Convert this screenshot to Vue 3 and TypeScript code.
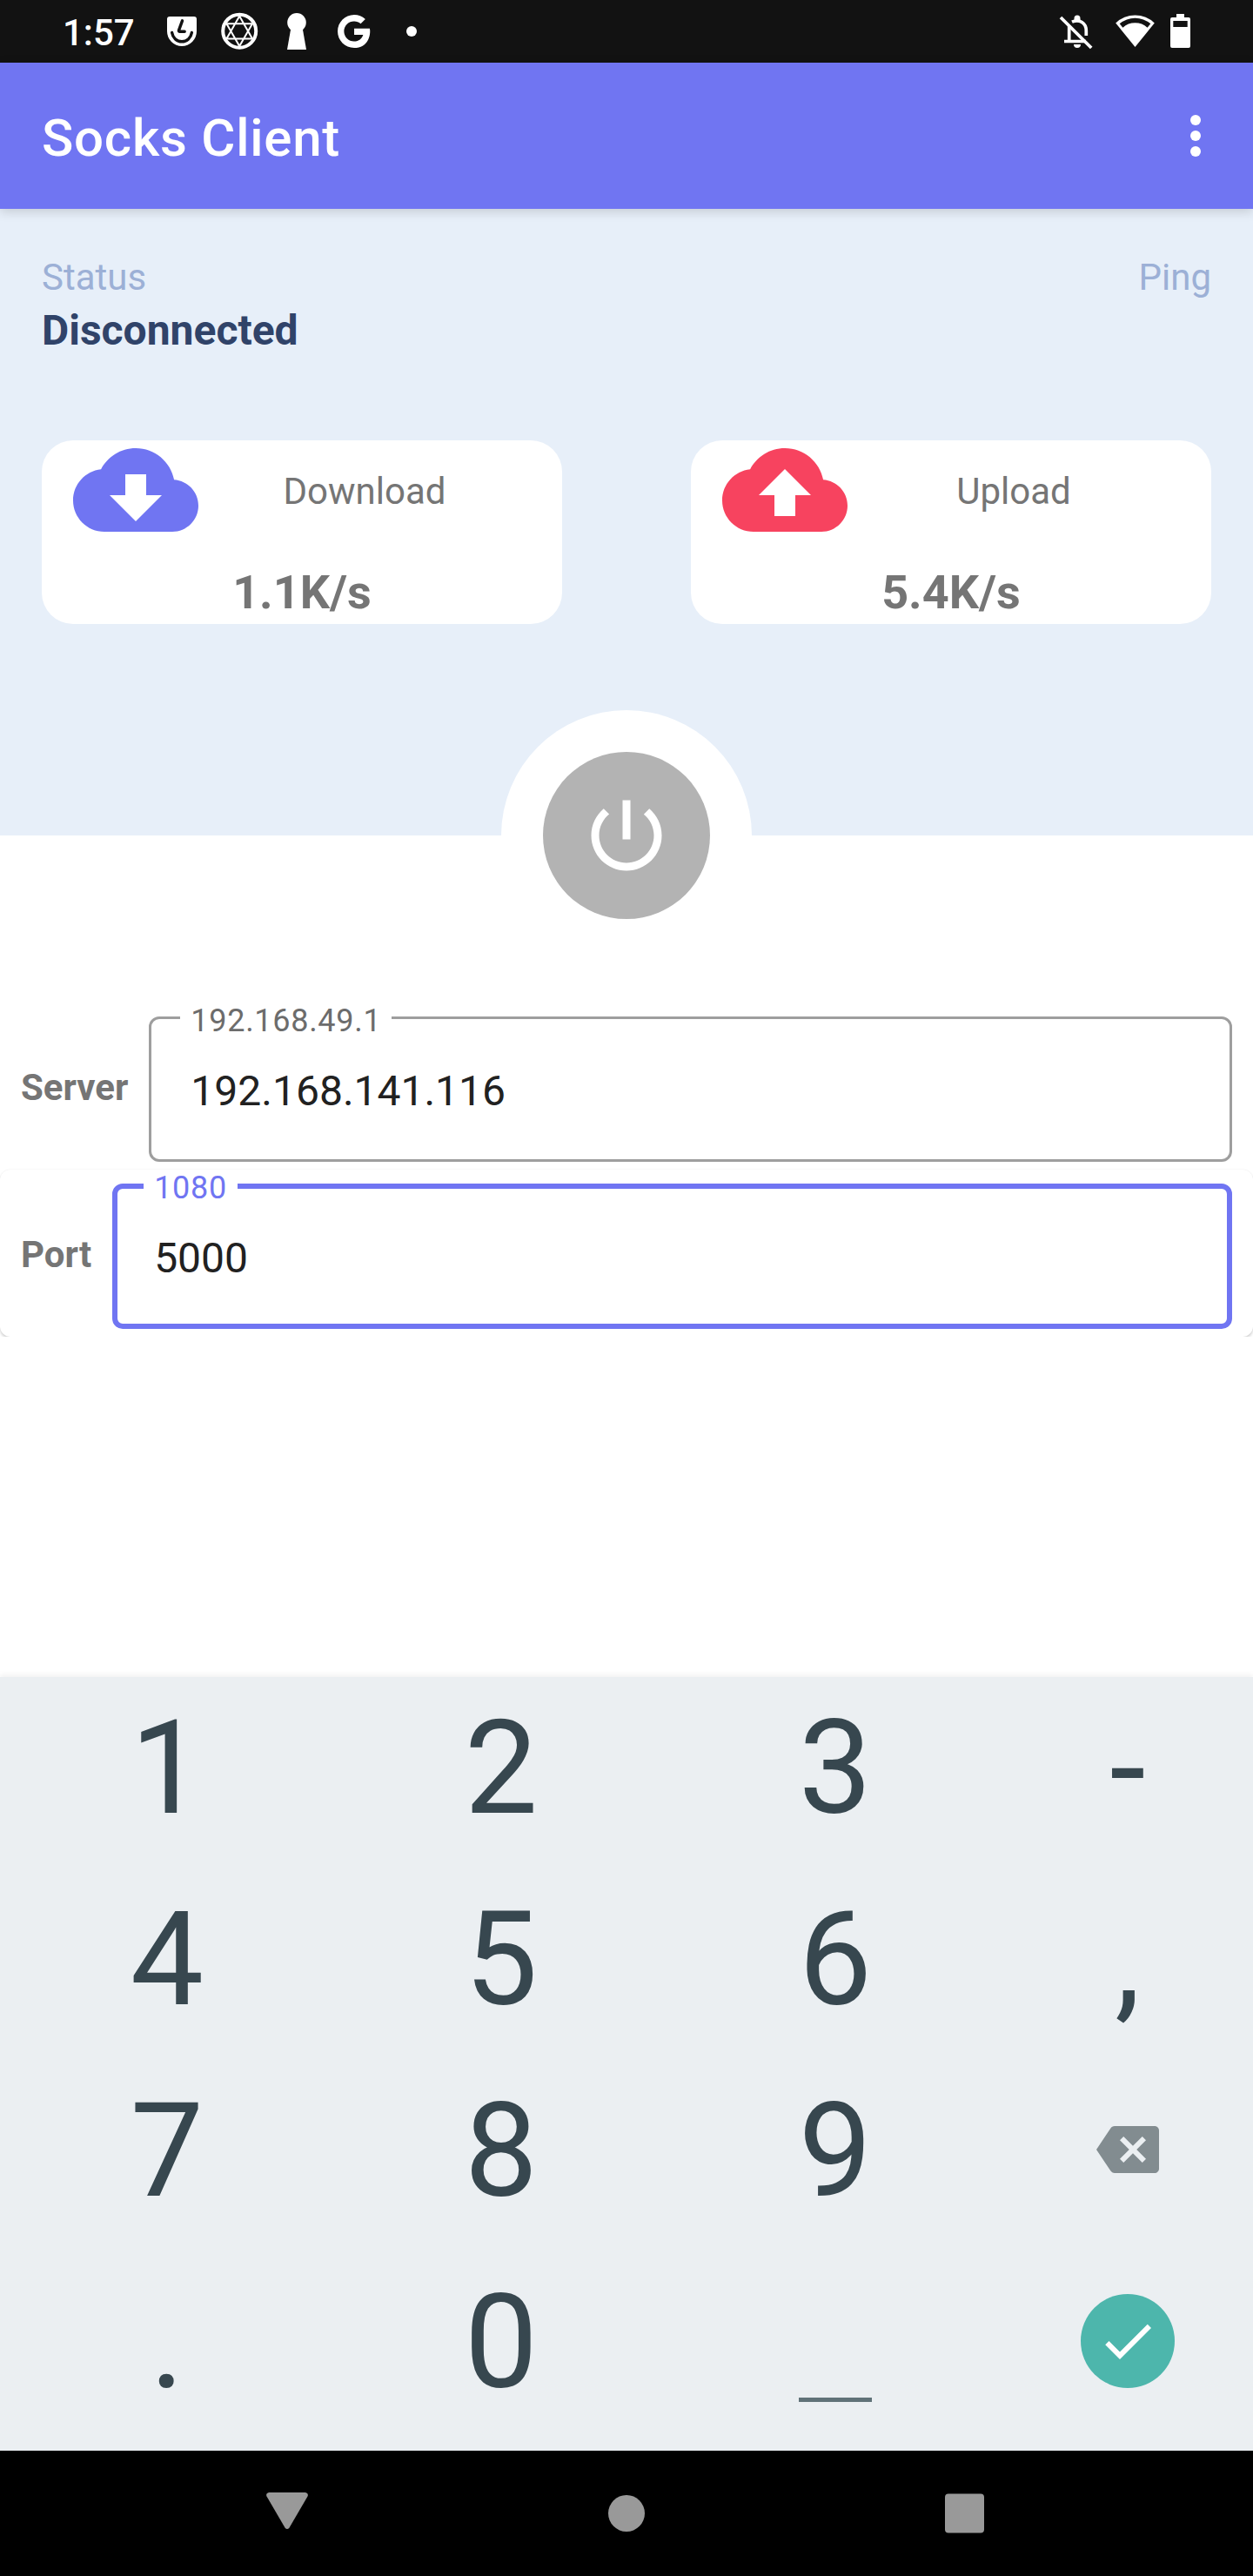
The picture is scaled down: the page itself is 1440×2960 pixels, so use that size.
<script setup lang="ts">
import { ref } from 'vue'

interface Transfer {
  id: string
  name: string
  rate: string
  color: string
  arrow: string
}

interface Field {
  id: string
  name: string
  hint: string
  value: string
  focused: boolean
}

const status = ref('Disconnected')

const transfers: Transfer[] = [
  { id: 'down', name: 'Download', rate: '1.1K/s', color: '#7075f2', arrow: 'M17 13l-5 5-5-5h3V9h4v4z' },
  { id: 'up', name: 'Upload', rate: '5.4K/s', color: '#f7435f', arrow: 'M14 13v4h-4v-4H7l5-5 5 5z' },
]

const fields = ref<Field[]>([
  { id: 'server', name: 'Server', hint: '192.168.49.1', value: '192.168.141.116', focused: false },
  { id: 'port', name: 'Port', hint: '1080', value: '5000', focused: true },
])

const keys: string[] = ['1', '2', '3', '-', '4', '5', '6', ',', '7', '8', '9', 'back', '.', '0', 'space', 'done']
</script>

<template>
  <div class="screen">
    <header class="status-bar">
      <span class="clock">1:57</span>
      <div class="notifications">
        <svg viewBox="0 0 48 48">
          <path fill="#fff" d="M10 7h28q3 0 3 3v14a17 17 0 0 1-34 0V10q0-3 3-3z" />
          <path class="cut" d="M12.6 25.5c1 6 5.6 10.3 11.4 10.3s10.400-4.300 11.400-10.300" />
          <path class="cut" d="M24.500 11.800l-4 11q-.4 1.500 1.200 1.500h5.500" />
        </svg>
        <svg viewBox="0 0 48 48" fill="none" stroke="#fff">
          <circle cx="24.200" cy="23.700" r="19" stroke-width="4" />
          <path stroke-width="2" d="M24.200 6.500L39 32.500H9.400zM24.200 41L9.400 15.200H39z" />
        </svg>
        <svg viewBox="0 0 48 48" fill="#fff">
          <circle cx="24" cy="13.800" r="10.800" />
          <path d="M17.300 20.500h13.400L35 45H13z" />
        </svg>
        <svg viewBox="0 0 48 48" fill="#fff">
          <path
            transform="translate(.2 1.200) scale(1.9)"
            d="M12.545 10.239v3.821h5.445c-.712 2.315-2.647 3.972-5.445 3.972a6.033 6.033 0 1 1 0-12.064c1.498 0 2.866.549 3.921 1.453l2.814-2.814A9.969 9.969 0 0 0 12.545 2C7.021 2 2.543 6.477 2.543 12s4.478 10 10.002 10c8.396 0 10.249-7.850 9.426-11.748z"
          />
        </svg>
        <svg viewBox="0 0 48 48" fill="#fff"><circle cx="24" cy="24" r="6" /></svg>
      </div>
      <div class="system">
        <svg viewBox="0 0 48 48" fill="none" stroke="#fff" stroke-width="3.700">
          <path d="M6 8l35.200 35" />
          <path d="M19 13.200c8.500-4 16.300 1.500 16.300 10V29M15.700 18v17M10 35.500h25" />
          <path fill="#fff" stroke="none" d="M21.500 12V9a3.500 3.500 0 0 1 7 0v3zM21 39h8a4 4 0 0 1-8 0z" />
        </svg>
        <svg class="wifi" viewBox="0 0 48 48">
          <path fill="#fff" d="M24.500 42L2.200 14.500A32 32 0 0 1 46.800 14.500z" />
          <path fill="#121212" d="M6.700 15.300A27.500 27.500 0 0 1 42.300 15.300L38.600 19.700A20.900 20.900 0 0 0 10.400 19.700z" />
        </svg>
        <svg class="battery" viewBox="0 0 24 48">
          <path fill="#fff" fill-rule="evenodd" d="M8 4h9v4h5q2 0 2 2v31q0 2-2 2H3q-2 0-2-2V10q0-2 2-2h5zM4.300 12v7h16.400v-7z" />
        </svg>
      </div>
    </header>

    <div class="app-bar">
      <h1>Socks Client</h1>
      <svg class="menu" viewBox="0 0 12 48" fill="#fff">
        <circle cx="6" cy="6" r="6" />
        <circle cx="6" cy="24" r="6" />
        <circle cx="6" cy="42" r="6" />
      </svg>
    </div>

    <section class="hero">
      <div class="captions"><span>Status</span><span>Ping</span></div>
      <div class="state">{{ status }}</div>
      <div class="cards">
        <article v-for="t in transfers" :key="t.id" class="card">
          <div class="card-head">
            <svg viewBox="0 4 24 16">
              <path
                :fill="t.color"
                d="M19.350 10.040C18.670 6.590 15.640 4 12 4 9.110 4 6.600 5.640 5.350 8.040 2.340 8.360 0 10.910 0 14c0 3.310 2.690 6 6 6h13c2.760 0 5-2.240 5-5 0-2.640-2.050-4.780-4.650-4.960z"
              />
              <path fill="#fff" :d="t.arrow" />
            </svg>
            <span>{{ t.name }}</span>
          </div>
          <div class="rate">{{ t.rate }}</div>
        </article>
      </div>
      <div class="power">
        <button aria-label="Connect">
          <svg viewBox="0 0 24 24" fill="#fff">
            <path
              d="M13 3h-2v10h2V3zm4.830 2.170l-1.420 1.420C17.990 7.860 19 9.810 19 12c0 3.870-3.130 7-7 7s-7-3.130-7-7c0-2.190 1.010-4.140 2.580-5.420L6.170 5.170C4.230 6.820 3 9.260 3 12c0 4.970 4.030 9 9 9s9-4.030 9-9c0-2.740-1.230-5.180-3.170-6.830z"
            />
          </svg>
        </button>
      </div>
    </section>

    <main class="form">
      <div v-for="f in fields" :key="f.id" class="row">
        <span class="name">{{ f.name }}</span>
        <div class="field" :class="{ focused: f.focused }">
          <span class="hint">{{ f.hint }}</span>
          <span class="value">{{ f.value }}</span>
        </div>
      </div>
    </main>

    <section class="keyboard">
      <div v-for="k in keys" :key="k" class="key">
        <svg v-if="k === 'back'" class="back" viewBox="0 3 24 18" fill="#828c90">
          <path
            fill-rule="evenodd"
            d="M22.300 3H7c-.69 0-1.230.350-1.590.880L0 12l5.410 8.110c.36.530.9.890 1.590.890h15.300c.95 0 1.700-.75 1.700-1.700V4.700c0-.95-.75-1.700-1.700-1.700zM19 15.590L17.590 17 14 13.410 10.410 17 9 15.590 12.590 12 9 8.410 10.410 7 14 10.590 17.590 7 19 8.410 15.410 12z"
          />
        </svg>
        <div v-else-if="k === 'space'" class="space"></div>
        <div v-else-if="k === 'done'" class="done">
          <svg viewBox="0 0 24 24" fill="#fff"><path d="M9 16.170L4.830 12l-1.420 1.410L9 19 21 7l-1.410-1.410z" /></svg>
        </div>
        <template v-else>{{ k }}</template>
      </div>
    </section>

    <nav class="nav-bar">
      <svg viewBox="0 0 48 48"><path d="M3 0h42q4 1 2.500 4.500L26.500 40.500q-2.500 3-5 0L.5 4.500Q-1 1 3 0z" /></svg>
      <svg viewBox="0 0 48 48"><circle cx="24" cy="24" r="21" /></svg>
      <svg viewBox="0 0 48 48"><rect x="0" y="1.500" width="45" height="45" rx="4" /></svg>
    </nav>
  </div>
</template>

<style>
body {
  margin: 0;
  background: #fff;
}
</style>

<style scoped>
.screen {
  display: flex;
  flex-direction: column;
  width: 1440px;
  height: 2960px;
  overflow: hidden;
  background: #fff;
  font-family: Roboto, sans-serif;
}

svg {
  display: block;
  flex: none;
}

.status-bar {
  display: flex;
  flex: none;
  align-items: center;
  height: 72px;
  padding-left: 72px;
  background: #121212;
  color: #fff;
}

.clock {
  width: 113px;
  padding-top: 3px;
  font-size: 42px;
  font-weight: 500;
}

.notifications {
  display: flex;
  gap: 18px;
}

.notifications svg,
.system svg {
  width: 48px;
  height: 48px;
}

.cut {
  fill: none;
  stroke: #121212;
  stroke-width: 3.400;
  stroke-linecap: round;
}

.system {
  display: flex;
  margin-left: auto;
  padding-right: 72px;
}

.system .wifi {
  margin-left: 19px;
}

.system .battery {
  width: 24px;
  margin-left: 16px;
}

.app-bar {
  position: relative;
  z-index: 1;
  display: flex;
  flex: none;
  align-items: center;
  justify-content: space-between;
  height: 168px;
  padding: 0 60px 0 48px;
  box-sizing: border-box;
  background: #7075f2;
  box-shadow: 0 3px 12px rgba(0, 0, 0, 0.160);
}

h1 {
  margin: 0;
  padding-top: 5px;
  color: #fff;
  font-size: 60px;
  font-weight: 500;
  letter-spacing: 0.750px;
}

.menu {
  width: 12px;
  height: 48px;
}

.hero {
  position: relative;
  flex: none;
  height: 720px;
  padding: 54px 48px 0;
  box-sizing: border-box;
  background: #e7eff9;
}

.captions {
  display: flex;
  justify-content: space-between;
  color: #9cb0d6;
  font-size: 42px;
  line-height: 50px;
}

.state {
  margin-top: 6px;
  color: #304369;
  font-size: 48px;
  font-weight: 700;
  line-height: 60px;
}

.cards {
  display: flex;
  justify-content: space-between;
  margin-top: 96px;
}

.card {
  width: 598px;
  height: 211px;
  border-radius: 36px;
  background: #fff;
  color: #757575;
}

.card-head {
  display: flex;
  align-items: center;
  padding: 9px 36px 0 36px;
}

.card-head svg {
  width: 144px;
  height: 96px;
}

.card-head span {
  flex: 1;
  padding-top: 4px;
  font-size: 42px;
  line-height: 50px;
  text-align: center;
}

.rate {
  margin-top: 37px;
  font-size: 54px;
  font-weight: 700;
  line-height: 65px;
  text-align: center;
}

.power {
  position: absolute;
  bottom: -144px;
  left: 576px;
  display: flex;
  align-items: center;
  justify-content: center;
  width: 288px;
  height: 288px;
  border-radius: 50%;
  background: #fff;
}

.power button {
  display: flex;
  align-items: center;
  justify-content: center;
  width: 192px;
  height: 192px;
  padding: 0;
  border: 0;
  border-radius: 50%;
  background: #b3b3b3;
}

.power svg {
  width: 108px;
  height: 108px;
}

.form {
  flex: 1;
  padding-top: 192px;
}

.row {
  display: flex;
  height: 192px;
  padding: 16px 24px 9px;
  box-sizing: border-box;
  border-radius: 12px;
}

.row + .row {
  box-shadow: 0 0 2px rgba(0, 0, 0, 0.100), 0 3px 3px rgba(0, 0, 0, 0.140);
  clip-path: inset(-3px 0 0 0);
}

.name {
  margin-right: 24px;
  color: #757575;
  font-size: 42px;
  font-weight: 700;
  line-height: 164px;
}

.field {
  position: relative;
  flex: 1;
  height: 167px;
  padding-left: 45px;
  box-sizing: border-box;
  border: 3px solid #9e9e9e;
  border-radius: 12px;
}

.value {
  color: #212121;
  font-size: 48px;
  line-height: 165px;
}

.hint {
  position: absolute;
  top: -19px;
  left: 33px;
  padding: 0 12px;
  background: #fff;
  color: #6c6c6c;
  font-size: 36px;
  letter-spacing: 0.700px;
  line-height: 42px;
}

.focused {
  padding-left: 42px;
  border: 6px solid #7075f2;
}

.focused .value {
  line-height: 159px;
}

.focused .hint {
  top: -22px;
  left: 30px;
  color: #7075f2;
}

.keyboard {
  display: grid;
  flex: none;
  grid-template-columns: 384px 384px 384px 288px;
  grid-auto-rows: 220px;
  height: 889px;
  background: #ebeff2;
  box-shadow: 0 -3px 6px rgba(0, 0, 0, 0.050);
  color: #37474f;
  font-size: 150px;
  line-height: 211px;
}

.key {
  display: flex;
  align-items: flex-start;
  justify-content: center;
}

.back {
  width: 72px;
  height: 54px;
  margin-top: 76px;
}

.space {
  width: 84px;
  height: 5px;
  margin-top: 168px;
  background: #607278;
}

.done {
  display: flex;
  align-items: center;
  justify-content: center;
  width: 108px;
  height: 108px;
  margin-top: 49px;
  border-radius: 50%;
  background: #4db6ac;
}

.done svg {
  width: 72px;
  height: 72px;
}

.nav-bar {
  display: flex;
  flex: none;
  align-items: center;
  justify-content: space-between;
  height: 144px;
  padding: 0 306px;
  box-sizing: border-box;
  background: #000;
}

.nav-bar svg {
  width: 48px;
  height: 48px;
  fill: #999;
}
</style>
